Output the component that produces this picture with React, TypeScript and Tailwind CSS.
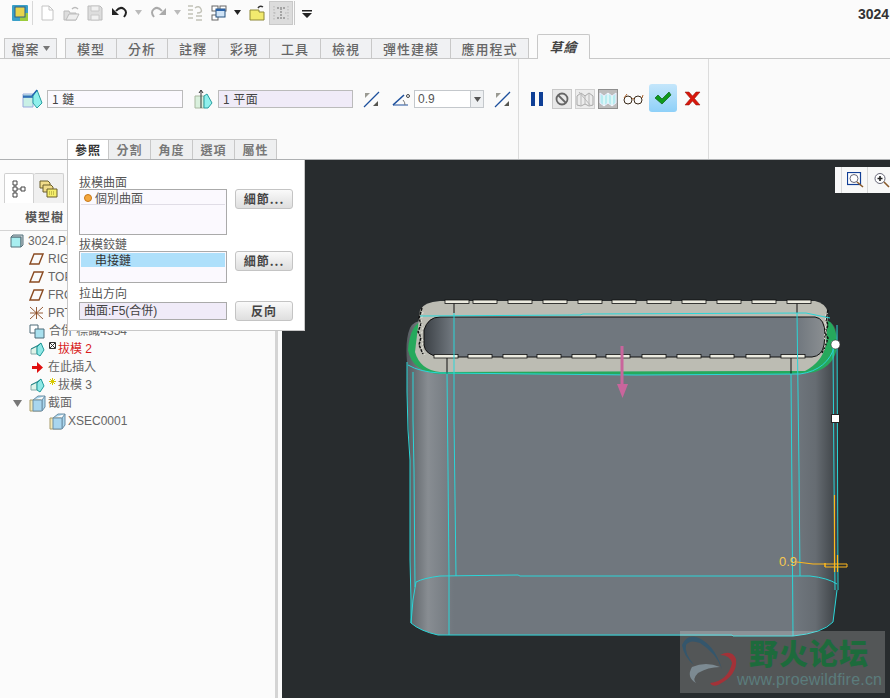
import React from 'react';

const mainTabs = [
  { label: '模型', w: 'w-[51px]' },
  { label: '分析', w: 'w-[51px]' },
  { label: '註釋', w: 'w-[51px]' },
  { label: '彩現', w: 'w-[51px]' },
  { label: '工具', w: 'w-[51px]' },
  { label: '檢視', w: 'w-[51px]' },
  { label: '彈性建模', w: 'w-[79px]' },
  { label: '應用程式', w: 'w-[79px]' },
];

const subTabs = ['分割', '角度', '選項', '屬性'];

const backDashes = [445, 473, 508, 543, 578, 612, 647, 682, 717, 752, 787];
const frontDashes = [434, 468, 503, 537, 572, 606, 642, 677, 710, 746, 781];

const cyanLines = [
  'M407 362 L407 392 L408 430 L410 460 L410 560 L411 600 L411 623',
  'M413 372 L413 420 L414 470 L415 587',
  'M447 374 L448 470 L449 576 L449 635',
  'M454 313 L454 420 L456 576',
  'M797 313 L799 470 L800 576',
  'M791 374 L792 500 L793 636',
  'M833 345 L834 480 L835 590',
  'M837 325 L838 590',
  'M411 623 L413 600 L416 582 Q424 578 440 576 L518 575 L520 576 L810 576 Q828 578 837 584',
  'M411 623 Q420 631 438 635 L732 635 L733 636 L793 636 Q823 633 833 622 L837 590',
  'M420 316 L580 315 L583 314 L806 313 L830 318',
  'M408 365 Q420 372 440 373 L636 375 L800 374 Q828 370 835 345',
];

function TreeBox() {
  return (
    <svg width="14" height="14" viewBox="0 0 14 14">
      <path d="M1 3h10v10H1z" fill="#a8eef0" stroke="#55727c" />
      <path d="M1 3l2-2h10v10l-2 2V3z" fill="#c6ccd0" stroke="#55727c" />
    </svg>
  );
}

function PlaneIcon() {
  return (
    <svg width="15" height="12" viewBox="0 0 15 12">
      <path d="M5 1h9l-4 10H1z" fill="none" stroke="#8a4b22" strokeWidth="1.4" />
    </svg>
  );
}

function DraftIcon() {
  return (
    <svg width="15" height="15" viewBox="0 0 15 15">
      <path d="M1 7l6-3v8H1z" fill="#dff3e8" stroke="#8aa" />
      <path d="M7 5l4-4 3 7-4 6-3-2z" fill="#8fe8e6" stroke="#1f9a9a" />
      <path d="M1 7l6-3 4-3" fill="none" stroke="#1f8a8a" />
    </svg>
  );
}

function SectionIcon() {
  return (
    <svg width="17" height="17" viewBox="0 0 17 17">
      <path d="M1 5h11v11H1z" fill="#f3e9b8" stroke="#a99c6a" />
      <path d="M4 5l5-4h7l-3 4v11l3-4V1" fill="#a9d6ee" stroke="#6c8ea4" />
      <path d="M4 5h9v11H4z" fill="#a9d6ee" stroke="#6c8ea4" />
    </svg>
  );
}

function TreeRow({ pl, icon, children, gap = 'gap-[4px]' }: { pl: string; icon: React.ReactNode; children: React.ReactNode; gap?: string }) {
  return (
    <div className={`flex h-[18px] items-center whitespace-nowrap text-[12px] text-[#666] ${pl} ${gap}`}>
      {icon}
      {children}
    </div>
  );
}

function DetailButton({ children }: { children: React.ReactNode }) {
  return (
    <button className="h-[20px] w-[58px] rounded-[3px] border border-[#c4c4c4] bg-gradient-to-b from-[#fafafa] to-[#dedede] text-[12px] font-bold tracking-[1px] text-[#444]">
      {children}
    </button>
  );
}

function SlashArrows() {
  return (
    <svg width="17" height="17" viewBox="0 0 17 17">
      <path d="M1 16L16 1" stroke="#1c4f9c" strokeWidth="1.3" />
      <path d="M2 2h5L2 7z" fill="#9a9a92" />
      <path d="M15 15h-5l5-5z" fill="#55554f" />
    </svg>
  );
}

function MenuCaret({ color = '#bbb' }: { color?: string }) {
  return (
    <svg width="7" height="5" viewBox="0 0 7 5">
      <path d="M0 0h7L3.5 5z" fill={color} />
    </svg>
  );
}

function QuickBar() {
  return (
    <div className="flex h-[39px] items-start overflow-hidden pt-[5px]">
      <svg className="ml-[12px]" width="16" height="16" viewBox="0 0 16 16">
        <rect width="16" height="16" rx="1" fill="#3aa0c8" />
        <rect x="8" y="8" width="8" height="8" fill="#9ccc3c" />
        <rect x="3" y="2" width="10" height="10" fill="#e7d44c" stroke="#2c5f88" />
      </svg>
      <div className="ml-[4px] -mt-[4px] h-[24px] w-px bg-[#d8d8d8]" />
      <svg className="ml-[8px]" width="13" height="16" viewBox="0 0 13 16">
        <path d="M1 1h7l4 4v10H1z" fill="#fff" stroke="#c4c4c4" />
        <path d="M8 1v4h4" fill="none" stroke="#c4c4c4" />
      </svg>
      <svg className="ml-[9px]" width="17" height="16" viewBox="0 0 17 16">
        <path d="M1 6h5l1 2h6v7H1z" fill="#ddd" stroke="#bbb" />
        <path d="M3 15l3-6h10l-3 6z" fill="#eee" stroke="#bbb" />
        <path d="M9 4q3-3 6 0" fill="none" stroke="#bbb" strokeWidth="1.5" />
      </svg>
      <svg className="ml-[7px]" width="16" height="16" viewBox="0 0 16 16">
        <path d="M1 1h12l2 2v12H1z" fill="#ddd" stroke="#bbb" />
        <path d="M4 1h8v5H4zM4 10h8v5H4z" fill="#f1f1f1" stroke="#c8c8c8" />
      </svg>
      <svg className="ml-[9px]" width="16" height="14" viewBox="0 0 16 14">
        <path d="M4 6q4-5 8-2t0 8" fill="none" stroke="#222" strokeWidth="2" />
        <path d="M0 3v7h7z" fill="#222" />
      </svg>
      <div className="ml-[7px] mt-[5px]"><MenuCaret /></div>
      <svg className="ml-[8px]" width="16" height="14" viewBox="0 0 16 14">
        <path d="M12 6Q8 1 4 4t0 8" fill="none" stroke="#aaa" strokeWidth="2" />
        <path d="M16 3v7H9z" fill="#aaa" />
      </svg>
      <div className="ml-[8px] mt-[5px]"><MenuCaret /></div>
      <svg className="ml-[6px]" width="16" height="16" viewBox="0 0 16 16">
        <path d="M1 1h5M1 5h5M1 9h5M1 13h5M9 15h6M9 11h6" stroke="#c2c2b8" strokeWidth="1.5" />
        <path d="M8 3q4-3 6 1t-4 4" fill="none" stroke="#c2c2b8" strokeWidth="1.4" />
      </svg>
      <svg className="ml-[8px]" width="16" height="16" viewBox="0 0 16 16">
        <rect x="1" y="1" width="6" height="5" fill="#fff" stroke="#666" />
        <rect x="9" y="1" width="6" height="5" fill="#fff" stroke="#666" />
        <rect x="1" y="10" width="6" height="5" fill="#fff" stroke="#666" />
        <rect x="5" y="4" width="9" height="8" fill="#cfe3f6" stroke="#24507f" />
        <rect x="5" y="4" width="9" height="2" fill="#2a62a8" />
      </svg>
      <div className="ml-[7px] mt-[5px]"><MenuCaret color="#222" /></div>
      <svg className="ml-[8px]" width="16" height="16" viewBox="0 0 16 16">
        <path d="M1 5h9v2h5v8H1z" fill="#f2ea6e" stroke="#8e8838" />
        <path d="M9 3q2-3 5-1" fill="none" stroke="#333" strokeWidth="1.5" />
      </svg>
      <div className="-mt-[4px] ml-[4px] flex h-[24px] w-[24px] items-center justify-center border border-[#c9c9c9] bg-[#dcdcdc]">
        <svg width="16" height="16" viewBox="0 0 16 16">
          <path d="M4 3h8M4 13h8M8 3v10" stroke="#a4a4a4" strokeWidth="2" strokeDasharray="2 1" />
          <path d="M1 1v14M15 1v14M1 8h3M12 8h3" stroke="#b5b5b5" strokeDasharray="1.5 1.5" />
        </svg>
      </div>
      <div className="-mt-[4px] ml-[1px] h-[24px] w-px bg-[#c8c8c8]" />
      <svg className="ml-[7px] mt-[5px]" width="10" height="8" viewBox="0 0 10 8">
        <path d="M0 0h10v1.5H0zM0 3h10L5 8z" fill="#222" />
      </svg>
      <div className="ml-auto w-[32px] overflow-hidden pt-[1px] font-['Liberation_Sans',sans-serif] text-[14px] font-bold leading-[16px] text-[#333]">
        3024
      </div>
    </div>
  );
}

function MainTabs() {
  return (
    <div className="relative flex h-[20px] items-end border-b border-[#c8c8c8] pl-[4px]">
      <div className="flex h-[20px] w-[53px] items-center justify-center gap-[3px] border-x border-t border-[#c8c8c8] bg-[#f0f1f3] text-[13px] font-medium tracking-[1px] text-[#666]">
        檔案
        <MenuCaret color="#777" />
      </div>
      <div className="ml-[8px] flex">
        {mainTabs.map((t) => (
          <div
            key={t.label}
            className={`flex h-[20px] items-center justify-center border-l border-t border-[#c8c8c8] bg-[#f0f1f3] text-[13px] font-medium tracking-[1px] text-[#666] last:border-r ${t.w}`}
          >
            {t.label}
          </div>
        ))}
      </div>
      <div className="ml-[8px] -mb-px flex h-[25px] w-[53px] items-center justify-center rounded-t-[2px] border-x border-t border-[#c8c8c8] bg-[#fafafa] text-[13px] font-bold italic tracking-[1px] text-[#444]">
        草繪
      </div>
    </div>
  );
}

function Ribbon() {
  return (
    <div className="flex h-[101px] border-b border-[#aeb0b2] bg-[#fafafa]">
      <div className="flex w-[519px] flex-col justify-between border-r border-[#dcdcdc]">
        <div className="mt-[31px] flex h-[18px] items-center">
          <svg className="ml-[22px]" width="21" height="20" viewBox="0 0 21 20">
            <path d="M1 5h10v13H1z" fill="#c9f0e6" stroke="#9ad" />
            <path d="M1 8h10" stroke="#1c5fb0" strokeWidth="1.5" />
            <path d="M11 7l4-6 5 13-5 5-4-5z" fill="#8ff0ec" stroke="#2a9fa0" />
            <path d="M1 7h9l5-6" fill="none" stroke="#1c5fb0" strokeWidth="1.2" />
          </svg>
          <div className="ml-[4px] flex h-[18px] w-[136px] items-center border border-[#bbb] bg-[#fbf9fe] pl-[4px] text-[12px] tracking-[0.5px] text-[#444]">
            1 鏈
          </div>
          <svg className="ml-[11px]" width="19" height="20" viewBox="0 0 19 20">
            <path d="M1 7h9v12H1z" fill="#d9f0dd" stroke="#a8b8a0" />
            <path d="M10 7l3-2 5 9-4 5h-4z" fill="#8ff0ec" stroke="#2a9fa0" />
            <path d="M7 19V2M5 4l2-3 2 3" fill="none" stroke="#333" />
          </svg>
          <div className="ml-[5px] flex h-[18px] w-[135px] items-center border border-[#bbb] bg-[#f0ebf8] pl-[4px] text-[12px] tracking-[0.5px] text-[#444]">
            1 平面
          </div>
          <div className="ml-[10px] flex"><SlashArrows /></div>
          <svg className="ml-[12px]" width="18" height="14" viewBox="0 0 18 14">
            <path d="M1 13L12 3" stroke="#1c4f9c" strokeWidth="1.6" />
            <path d="M1 13h15" stroke="#1c4f9c" strokeWidth="1" />
            <path d="M11 8q2 2 2 5" fill="none" stroke="#777" />
            <circle cx="16" cy="4" r="1.5" fill="none" stroke="#444" />
          </svg>
          <div className="ml-[4px] flex h-[18px] w-[70px] border border-[#c4c8cc] bg-white">
            <div className="flex flex-1 items-center pl-[3px] font-['Liberation_Sans',sans-serif] text-[12px] text-[#555]">0.9</div>
            <div className="flex w-[13px] items-center justify-center border-l border-[#c4c8cc] bg-[#eef0f2]">
              <MenuCaret color="#555" />
            </div>
          </div>
          <div className="ml-[10px] flex"><SlashArrows /></div>
        </div>
        <div className="ml-[67px] flex h-[20px]">
          <div className="flex h-[20px] w-[42px] items-center justify-center border-x border-t border-[#c8c8c8] bg-white text-[12px] font-bold tracking-[1px] text-[#333]">
            參照
          </div>
          {subTabs.map((t) => (
            <div
              key={t}
              className="flex h-[20px] w-[42px] items-center justify-center border-r border-t border-[#c8c8c8] bg-[#eeeff0] text-[12px] font-bold tracking-[1px] text-[#777]"
            >
              {t}
            </div>
          ))}
        </div>
      </div>
      <div className="flex w-[190px] items-start border-r border-[#dcdcdc] pt-[26px]">
        <div className="ml-[12px] mt-[7px] flex h-[14px] w-[12px] justify-between">
          <div className="w-[4px] bg-[#0f3f96]" />
          <div className="w-[4px] bg-[#0f3f96]" />
        </div>
        <div className="ml-[9px] mt-[4px] flex h-[20px] w-[20px] items-center justify-center border border-[#c8c8c8] bg-[#e8e8e8]">
          <svg width="14" height="14" viewBox="0 0 14 14">
            <circle cx="7" cy="7" r="5.5" fill="none" stroke="#666" strokeWidth="1.8" />
            <path d="M3 3l8 8" stroke="#666" strokeWidth="1.8" />
          </svg>
        </div>
        <div className="ml-[3px] mt-[4px] flex h-[20px] w-[20px] items-center justify-center border border-[#d0d0d0] bg-[#ececec]">
          <svg width="18" height="16" viewBox="0 0 18 16">
            <path d="M1 5l4-3 4 3 4-3 4 3v9l-4 1-4-2-4 2-4-1z" fill="none" stroke="#a8a8a8" />
            <path d="M5 2v13M9 5v8M13 2v13M3 1l12 14" stroke="#b8b8b8" />
          </svg>
        </div>
        <div className="ml-[3px] mt-[4px] flex h-[20px] w-[20px] items-center justify-center border border-[#8e8e8e] bg-[#bcbcbc]">
          <svg width="18" height="16" viewBox="0 0 18 16">
            <path d="M1 2l4 3 4-3 4 3 4-3v10l-4 3-4-3-4 3-4-3z" fill="#b8ecf0" stroke="#eef" />
            <path d="M5 5v10M9 2v10M13 5v10" stroke="#fff" />
          </svg>
        </div>
        <svg className="ml-[5px] mt-[8px]" width="21" height="12" viewBox="0 0 21 12">
          <circle cx="5" cy="7" r="4" fill="none" stroke="#3a2a1a" />
          <circle cx="15" cy="7" r="4" fill="none" stroke="#3a2a1a" />
          <path d="M9 6q1-1 2 0M1 5l3-4M19 5l1-3" fill="none" stroke="#a8602a" />
        </svg>
        <div className="ml-[5px] -mt-[1px] flex h-[28px] w-[28px] items-center justify-center rounded-[3px] bg-gradient-to-b from-[#c4e6fb] to-[#8ed0f8]">
          <svg width="18" height="14" viewBox="0 0 18 14">
            <path d="M1 7l3-3 4 4 7-7 2 3-9 9z" fill="#0e9a1c" stroke="#0a5f14" strokeWidth="0.7" />
          </svg>
        </div>
        <svg className="ml-[7px] mt-[6px]" width="17" height="15" viewBox="0 0 17 15">
          <path d="M1 1h4l3.5 4L12 1h4l-5.500 6.500L16 14h-4l-3.500-4L5 14H1l5.500-6.500z" fill="#d8170c" stroke="#8e1208" strokeWidth="0.5" />
        </svg>
      </div>
      <div className="flex-1" />
    </div>
  );
}

function ModelTree() {
  return (
    <div className="h-full w-[278px] shrink-0 border-r-[3px] border-[#d4d4d4] bg-[#fbfbfb]">
      <div className="ml-[4px] mt-[13px] flex h-[30px] items-end">
        <div className="flex h-[30px] w-[30px] items-center justify-center rounded-t-[2px] border-x border-t border-[#d0d0d0] bg-white">
          <svg width="14" height="18" viewBox="0 0 14 18">
            <path d="M3 4v10M3 9h6" stroke="#555" />
            <path d="M1 1h4v4H1zM1 7h4v4H1zM1 13h4v4H1zM9 7h4v4H9z" fill="#fff" stroke="#444" />
          </svg>
        </div>
        <div className="flex h-[30px] w-[30px] items-center justify-center rounded-t-[2px] border-r border-t border-[#d0d0d0] bg-[#f0f0f0]">
          <svg width="19" height="18" viewBox="0 0 19 18">
            <path d="M1 1h8l2 2v5H1z" fill="#f1dc8a" stroke="#6b5f2a" />
            <path d="M4 5h8l2 2v5H4z" fill="#f1dc8a" stroke="#6b5f2a" />
            <path d="M8 9h10v8H8z" fill="#f5ee6a" stroke="#6b5f2a" />
            <path d="M10 12h6M10 14h6" stroke="#98902f" strokeDasharray="1 1" />
          </svg>
        </div>
      </div>
      <div className="flex h-[28px] items-center border-b border-[#d4d4d4] pl-[25px] text-[12px] font-bold tracking-[1px] text-[#555]">
        模型樹
      </div>
      <div className="pt-[1px] font-['Liberation_Sans','Noto_Sans_CJK_TC',sans-serif]">
        <TreeRow pl="pl-[10px]" icon={<TreeBox />}>3024.PRT</TreeRow>
        <TreeRow pl="pl-[29px]" icon={<PlaneIcon />}>RIGHT</TreeRow>
        <TreeRow pl="pl-[29px]" icon={<PlaneIcon />}>TOP</TreeRow>
        <TreeRow pl="pl-[29px]" icon={<PlaneIcon />}>FRONT</TreeRow>
        <TreeRow
          pl="pl-[29px]"
          icon={
            <svg width="15" height="14" viewBox="0 0 15 14">
              <path d="M1 1l13 12M14 1L1 13M7.500 1v12M1 7h13" stroke="#8a4b22" strokeWidth="0.9" />
            </svg>
          }
        >
          PRT_CSYS_DEF
        </TreeRow>
        <TreeRow
          pl="pl-[29px]"
          icon={
            <svg width="16" height="15" viewBox="0 0 16 15">
              <path d="M1 1h8v8H1z" fill="#fff" stroke="#4c6a78" />
              <path d="M6 5h9v9H6z" fill="#a8e0ee" stroke="#4c6a78" />
            </svg>
          }
        >
          合併 標識4354
        </TreeRow>
        <TreeRow
          pl="pl-[30px]"
          icon={
            <div className="flex items-start gap-[4px]">
              <DraftIcon />
              <svg width="7" height="7" viewBox="0 0 7 7">
                <path d="M.5.5h6v6h-6zM1 1l5 5M6 1L1 6" fill="none" stroke="#333" />
              </svg>
            </div>
          }
          gap="gap-[2px]"
        >
          <span className="text-[#d81c1c]">拔模 2</span>
        </TreeRow>
        <TreeRow
          pl="pl-[32px]"
          icon={
            <svg width="11" height="11" viewBox="0 0 11 11">
              <path d="M0 4h5V0l6 5.500L5 11V7H0z" fill="#e01010" />
            </svg>
          }
          gap="gap-[5px]"
        >
          在此插入
        </TreeRow>
        <TreeRow
          pl="pl-[30px]"
          icon={
            <div className="flex items-start gap-[4px]">
              <DraftIcon />
              <svg width="7" height="7" viewBox="0 0 7 7">
                <path d="M3.500 0v7M0 3.500h7M1 1l5 5M6 1L1 6" stroke="#d8c800" />
              </svg>
            </div>
          }
          gap="gap-[2px]"
        >
          拔模 3
        </TreeRow>
        <TreeRow
          pl="pl-[13px]"
          icon={
            <div className="flex items-center gap-[7px]">
              <svg width="9" height="7" viewBox="0 0 9 7">
                <path d="M0 0h9L4.500 7z" fill="#777" />
              </svg>
              <SectionIcon />
            </div>
          }
          gap="gap-[2px]"
        >
          截面
        </TreeRow>
        <TreeRow pl="pl-[49px]" icon={<SectionIcon />} gap="gap-[2px]">XSEC0001</TreeRow>
      </div>
    </div>
  );
}

function ReferencePanel() {
  return (
    <div className="absolute left-[67px] top-[160px] z-10 h-[171px] w-[238px] border border-t-0 border-[#c8c8c8] bg-white pl-[11px] text-[12px] text-[#555]">
      <div className="mt-[15px] h-[14px] leading-[14px]">拔模曲面</div>
      <div className="flex gap-[8px]">
        <div className="h-[46px] w-[148px] border border-[#aaa] bg-[#fbf9fe] p-px">
          <div className="flex h-[14px] items-center gap-[3px] border-b border-[#e0dde6] pl-[3px]">
            <div className="h-[8px] w-[8px] rounded-full border border-[#c87818] bg-[#f4a840]" />
            個別曲面
          </div>
        </div>
        <DetailButton>細節...</DetailButton>
      </div>
      <div className="mt-[2px] h-[14px] leading-[14px]">拔模鉸鏈</div>
      <div className="flex gap-[8px]">
        <div className="h-[32px] w-[148px] border border-[#aaa] bg-[#fbf9fe] p-px">
          <div className="flex h-[14px] items-center bg-[#aee0fb] pl-[14px] text-[#333]">串接鏈</div>
        </div>
        <DetailButton>細節...</DetailButton>
      </div>
      <div className="mt-[3px] h-[14px] leading-[14px]">拉出方向</div>
      <div className="mt-[1px] flex items-start gap-[8px]">
        <div className="mt-[1px] flex h-[18px] w-[148px] items-center border border-[#aaa] bg-[#f0ebf8] pl-[4px] font-['Liberation_Sans','Noto_Sans_CJK_TC',sans-serif] text-[#444]">
          曲面:F5(合併)
        </div>
        <DetailButton>反向</DetailButton>
      </div>
    </div>
  );
}

function ModelDrawing() {
  return (
    <svg className="absolute inset-0" width="608" height="538" viewBox="282 160 608 538">
      <defs>
        <linearGradient id="bodyShade" x1="0" x2="1" y1="0" y2="0">
          <stop offset="0" stopColor="#555b60" />
          <stop offset="0.05" stopColor="#888d92" />
          <stop offset="0.11" stopColor="#70777e" />
          <stop offset="0.9" stopColor="#70777e" />
          <stop offset="0.95" stopColor="#666c72" />
          <stop offset="1" stopColor="#3c4145" />
        </linearGradient>
        <linearGradient id="holeShade" x1="0" x2="1" y1="0" y2="0">
          <stop offset="0" stopColor="#3c4146" />
          <stop offset="0.07" stopColor="#70777e" />
          <stop offset="0.93" stopColor="#70777e" />
          <stop offset="1" stopColor="#8b8f92" />
        </linearGradient>
      </defs>
      <path
        d="M407 362Q405 340 410 328Q413 321 425 320L822 320Q836 321 837 335L837 590L833 622Q823 632 793 636L438 635Q420 631 411 623L410 560L410 460L407 392Z"
        fill="url(#bodyShade)"
      />
      <path d="M408 350Q410 323 425 320L825 320Q837 322 837 345Q836 365 815 372Q800 375 700 375L440 374Q412 372 408 350Z" fill="#26a95c" />
      <path d="M420 310Q424 302 440 301L815 301Q825 303 828 312L826 345Q822 362 805 371L440 372Q420 370 415 352Z" fill="#bcbcb3" />
      <path d="M424 330Q428 317 440 317L815 317Q825 318 825 335L824 345Q822 356 812 357L440 357Q425 355 424 345Z" fill="url(#holeShade)" stroke="#111" strokeWidth="1" />
      <path d="M447 358v16M791 358v16M454 303v10M797 303v10" fill="none" stroke="#111" />
      <path d="M422 308l-3 10 2 6-3 8 3 5-2 8 4 9M828 310l-2 9 2 6-3 8 3 5-3 9-3 6" fill="none" stroke="#111" strokeWidth="1.500" strokeDasharray="3 1" />
      <path d="M423 312l-2 10 2 6-2 8 2 5-1 8 3 6M826 314l-1 9 1 6-2 8 2 5-2 8" fill="none" stroke="#e8e8e0" strokeDasharray="2 2" />
      {backDashes.map((x) => (
        <rect key={x} x={x} y="300" width="24" height="3.500" fill="#ecebe0" stroke="#111" strokeWidth="0.8" />
      ))}
      {frontDashes.map((x) => (
        <rect key={x} x={x} y="354.500" width="24" height="3.500" fill="#ecebe0" stroke="#111" strokeWidth="0.8" />
      ))}
      {cyanLines.map((d) => (
        <path key={d} d={d} fill="none" stroke="#2bd6d8" strokeWidth="1" />
      ))}
      <path d="M620.500 346h3v38h4.500l-5.500 14-5.500-14h3.500z" fill="#c9659c" />
      <path d="M834.500 495v77M837.500 555v17" fill="none" stroke="#ffb81c" strokeWidth="1.200" />
      <path d="M797 562l16 2h34v3h-22v-4M825 563v4" fill="none" stroke="#ffb81c" strokeWidth="1" />
      <text x="779" y="566" fontSize="13" fontFamily="Liberation Sans, sans-serif" fill="#f6c850">0.9</text>
      <circle cx="835.500" cy="344.500" r="4.500" fill="#fff" stroke="#333" strokeWidth="0.6" />
      <rect x="831.500" y="414.500" width="8" height="8" fill="#fff" stroke="#222" />
    </svg>
  );
}

function Viewport() {
  return (
    <div className="relative ml-[4px] h-full flex-1 overflow-hidden bg-[#282c2e]">
      <ModelDrawing />
      <div className="absolute left-[553px] top-[7px] flex h-[26px] w-[55px] bg-[#f8f8f8]">
        <div className="ml-[6px] flex w-[27px] items-center justify-center border-x border-[#d8d8d8] pl-[1px]">
          <svg width="17" height="16" viewBox="0 0 17 16">
            <rect x="0.500" y="0.500" width="13" height="12" fill="#fff" stroke="#123f96" strokeWidth="1.2" />
            <circle cx="7" cy="6.500" r="4" fill="none" stroke="#667" />
            <path d="M10 10l6 5" stroke="#8a5a2a" strokeWidth="1.6" />
          </svg>
        </div>
        <div className="flex flex-1 items-center pl-[5px]">
          <svg width="17" height="16" viewBox="0 0 17 16">
            <circle cx="7" cy="6.500" r="5" fill="#fff" stroke="#667" />
            <path d="M4.500 6.500h5M7 4v5" stroke="#222" strokeWidth="1.6" />
            <path d="M11 10l5 5" stroke="#8a5a2a" strokeWidth="1.6" />
          </svg>
        </div>
      </div>
      <div className="absolute left-[398px] top-[471px] flex h-[62px] w-[205px] bg-white/20">
        <svg className="shrink-0" width="60" height="62" viewBox="0 0 60 62">
          <path d="M2 14Q6 4 16 6Q34 12 42 38Q36 22 20 12Q10 8 6 14Q4 22 14 34Q4 26 2 14Z" fill="#34566c" />
          <path d="M40 24Q52 18 56 28Q58 44 38 54Q32 56 30 52Q48 50 52 32Q50 24 40 24Z" fill="#a33238" />
          <path d="M12 36Q26 30 40 36Q28 36 18 42Q12 48 16 52Q6 46 12 36Z" fill="#7c8a92" />
        </svg>
        <div className="min-w-0 flex-1">
          <div className="mt-[3px] pl-[9px] font-['Noto_Sans_CJK_SC',sans-serif] text-[29px] font-black leading-[36px] tracking-[1px] whitespace-nowrap text-[#1d6b3c]">
            野火论坛
          </div>
          <div className="-ml-[3px] font-['Liberation_Sans',sans-serif] text-[16px] leading-[20px] tracking-[0.2px] whitespace-nowrap text-[#5b7c7c]">
            www.proewildfire.cn
          </div>
        </div>
      </div>
    </div>
  );
}

export default function App() {
  return (
    <div className="relative h-[698px] w-[890px] overflow-hidden bg-[#fbfbfb] font-['Noto_Sans_CJK_TC',sans-serif]">
      <QuickBar />
      <MainTabs />
      <Ribbon />
      <div className="flex h-[538px]">
        <ModelTree />
        <Viewport />
      </div>
      <ReferencePanel />
    </div>
  );
}
